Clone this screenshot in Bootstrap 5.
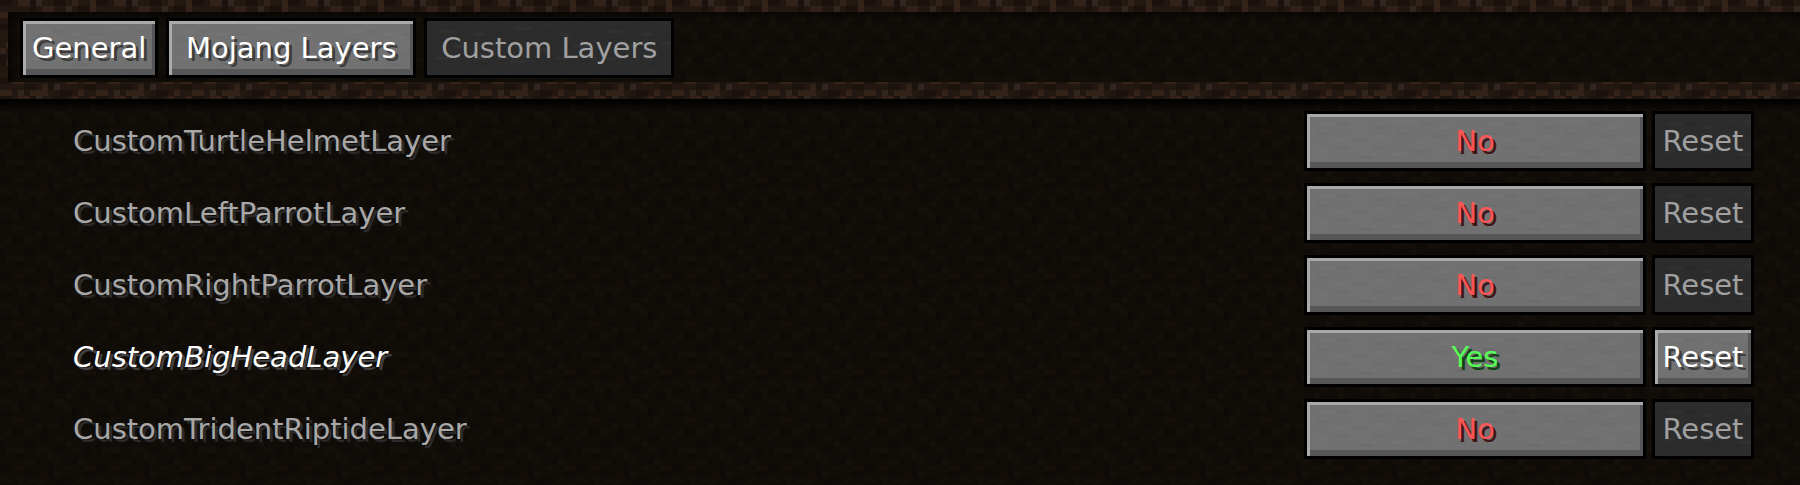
<!DOCTYPE html>
<html lang="en">
<head>
<meta charset="utf-8">
<meta name="viewport" content="width=device-width, initial-scale=1">
<title>Custom Layers</title>
<link href="https://cdn.jsdelivr.net/npm/bootstrap@5.3.0/dist/css/bootstrap.min.css" rel="stylesheet">
<style>
  :root {
    /* 16x16 dirt tile, 6px per texel */
    --dirt: url("data:image/svg+xml,%3Csvg xmlns='http://www.w3.org/2000/svg' width='96' height='96' viewBox='0 0 16 16' shape-rendering='crispEdges'%3E%3Cpath fill='%23000' fill-opacity='.24' d='M0 0h2v1h-2zM5 0h1v2h-1zM9 0h2v1h-2zM13 1h2v1h-2zM3 2h1v2h-1zM7 3h2v1h-2zM12 3h1v2h-1zM0 4h2v1h-2zM5 5h2v1h-2zM10 5h1v2h-1zM14 6h2v1h-2zM2 7h2v1h-2zM7 7h1v2h-1zM12 8h2v1h-2zM0 9h1v2h-1zM4 9h2v1h-2zM9 10h2v1h-2zM14 10h1v2h-1zM2 11h2v1h-2zM6 12h1v1h-1zM11 12h2v1h-2zM0 13h2v1h-2zM4 14h2v1h-2zM8 13h1v2h-1zM14 14h2v1h-2zM10 15h2v1h-2z'/%3E%3Cpath fill='%23a86a4a' fill-opacity='.12' d='M3 0h2v1h-2zM7 1h2v1h-2zM12 0h1v1h-1zM15 0h1v2h-1zM0 2h2v1h-2zM5 3h2v1h-2zM10 3h2v1h-2zM14 4h1v1h-1zM2 5h2v1h-2zM8 6h2v1h-2zM12 6h1v1h-1zM4 7h2v1h-2zM0 8h1v1h-1zM9 8h2v1h-2zM14 8h1v1h-1zM6 10h2v1h-2zM1 10h2v1h-2zM12 10h1v1h-1zM4 12h2v1h-2zM9 12h1v1h-1zM14 13h2v1h-2zM2 13h2v1h-2zM7 14h1v1h-1zM11 13h2v1h-2zM0 15h2v1h-2zM5 15h3v1h-3zM13 15h1v1h-1z'/%3E%3Cpath fill='%23aaa' fill-opacity='.1' d='M6 0h1v1h-1zM11 1h1v1h-1zM9 2h2v1h-2zM2 3h1v1h-1zM13 5h1v1h-1zM6 6h1v1h-1zM1 7h1v1h-1zM11 9h1v1h-1zM3 10h1v1h-1zM8 11h1v1h-1zM13 12h1v1h-1zM3 15h1v1h-1zM9 14h1v1h-1z'/%3E%3C/svg%3E");
    /* faint grain of the stone buttons */
    --stone: url("data:image/svg+xml,%3Csvg xmlns='http://www.w3.org/2000/svg' width='168' height='54' shape-rendering='crispEdges'%3E%3Cpath fill='%23fff' fill-opacity='.025' d='M12 9h15v3h-15zM48 12h9v3h-9zM87 6h18v3h-18zM132 12h12v3h-12zM27 24h12v3h-12zM66 21h15v3h-15zM111 27h9v3h-9zM147 24h15v3h-15zM9 36h12v3h-12zM48 36h9v3h-9zM84 39h15v3h-15zM129 36h12v3h-12z'/%3E%3Cpath fill='%23000' fill-opacity='.035' d='M30 9h12v3h-12zM66 12h15v3h-15zM114 9h12v3h-12zM9 18h12v3h-12zM45 24h15v3h-15zM90 18h12v3h-12zM126 21h12v3h-12zM27 33h15v3h-15zM66 33h9v3h-9zM105 36h18v3h-18zM147 39h12v3h-12zM51 42h15v3h-15z'/%3E%3C/svg%3E");
  }
  body {
    min-height: 100vh;
    color: #a8a8a8;
    font-family: "DejaVu Sans", sans-serif;
    font-size: 29px;
    line-height: 36px;
    background: linear-gradient(rgba(10, 8, 5, .75), rgba(10, 8, 5, .75)), var(--dirt) 0 3px #231811;
  }
  .tab-strip {
    padding: 12px 0 17px 8px;
    background: var(--dirt) #231811;
  }
  .tab-well {
    padding: 6px 12px 4px;
    background: linear-gradient(#0008, #0000 8px), linear-gradient(90deg, #0008, #0000 12px),
      linear-gradient(rgba(10, 8, 5, .75), rgba(10, 8, 5, .75)), var(--dirt) 0 3px #231811;
  }
  .option-list {
    padding: 12px 46px 12px 73px;
    background: linear-gradient(#000, #0000 12px) no-repeat;
  }
  .option-row { gap: 6px; }
  .stone-btn {
    height: 60px;
    padding: 0 9px;
    color: #fff;
    font-size: 29px;
    line-height: 36px;
    text-shadow: 3px 3px 0 #3c3c3c;
    white-space: nowrap;
    border: 3px solid #000;
    border-radius: 0;
    background: var(--stone) #717171;
    box-shadow: inset 3px 3px 0 #aaa, inset -3px -6px 0 #565656;
  }
  .stone-btn:hover { color: #fff; background-color: #7c86b8; border-color: #fff; }
  .stone-btn:disabled {
    color: #a0a0a0;
    text-shadow: none;
    opacity: 1;
    border-color: #000;
    background: var(--stone) #2c2c2c;
    box-shadow: none;
  }
  .tab-short { min-width: 138px; }
  .tab-long { min-width: 250px; }
  .toggle-btn { width: 342px; }
  .reset-btn { width: 102px; padding: 0; }
  .value-no, .value-no:hover { color: #ff5555; text-shadow: 3px 3px 0 #3f1515; }
  .value-yes, .value-yes:hover { color: #55ff55; text-shadow: 3px 3px 0 #153f15; }
  .option-name { text-shadow: 3px 3px 0 #2a2a2a; }
  .option-changed { color: #fff; font-style: italic; text-shadow: 3px 3px 0 #3f3f3f; }
</style>
</head>
<body>
<header class="tab-strip">
  <nav class="tab-well d-flex gap-2" aria-label="Categories">
    <button type="button" class="btn stone-btn tab-short">General</button>
    <button type="button" class="btn stone-btn tab-long">Mojang Layers</button>
    <button type="button" class="btn stone-btn tab-long" disabled>Custom Layers</button>
  </nav>
</header>
<main>
  <form class="option-list d-grid">
    <div class="option-row d-flex align-items-center mb-2 pb-1">
      <label class="option-name flex-grow-1" for="turtle">CustomTurtleHelmetLayer</label>
      <button type="button" class="btn stone-btn toggle-btn value-no" id="turtle">No</button>
      <button type="button" class="btn stone-btn reset-btn" disabled>Reset</button>
    </div>
    <div class="option-row d-flex align-items-center mb-2 pb-1">
      <label class="option-name flex-grow-1" for="left-parrot">CustomLeftParrotLayer</label>
      <button type="button" class="btn stone-btn toggle-btn value-no" id="left-parrot">No</button>
      <button type="button" class="btn stone-btn reset-btn" disabled>Reset</button>
    </div>
    <div class="option-row d-flex align-items-center mb-2 pb-1">
      <label class="option-name flex-grow-1" for="right-parrot">CustomRightParrotLayer</label>
      <button type="button" class="btn stone-btn toggle-btn value-no" id="right-parrot">No</button>
      <button type="button" class="btn stone-btn reset-btn" disabled>Reset</button>
    </div>
    <div class="option-row d-flex align-items-center mb-2 pb-1">
      <label class="option-name option-changed flex-grow-1" for="big-head">CustomBigHeadLayer</label>
      <button type="button" class="btn stone-btn toggle-btn value-yes" id="big-head">Yes</button>
      <button type="button" class="btn stone-btn reset-btn">Reset</button>
    </div>
    <div class="option-row d-flex align-items-center">
      <label class="option-name flex-grow-1" for="riptide">CustomTridentRiptideLayer</label>
      <button type="button" class="btn stone-btn toggle-btn value-no" id="riptide">No</button>
      <button type="button" class="btn stone-btn reset-btn" disabled>Reset</button>
    </div>
  </form>
</main>
<script src="https://cdn.jsdelivr.net/npm/bootstrap@5.3.0/dist/js/bootstrap.bundle.min.js"></script>
</body>
</html>
